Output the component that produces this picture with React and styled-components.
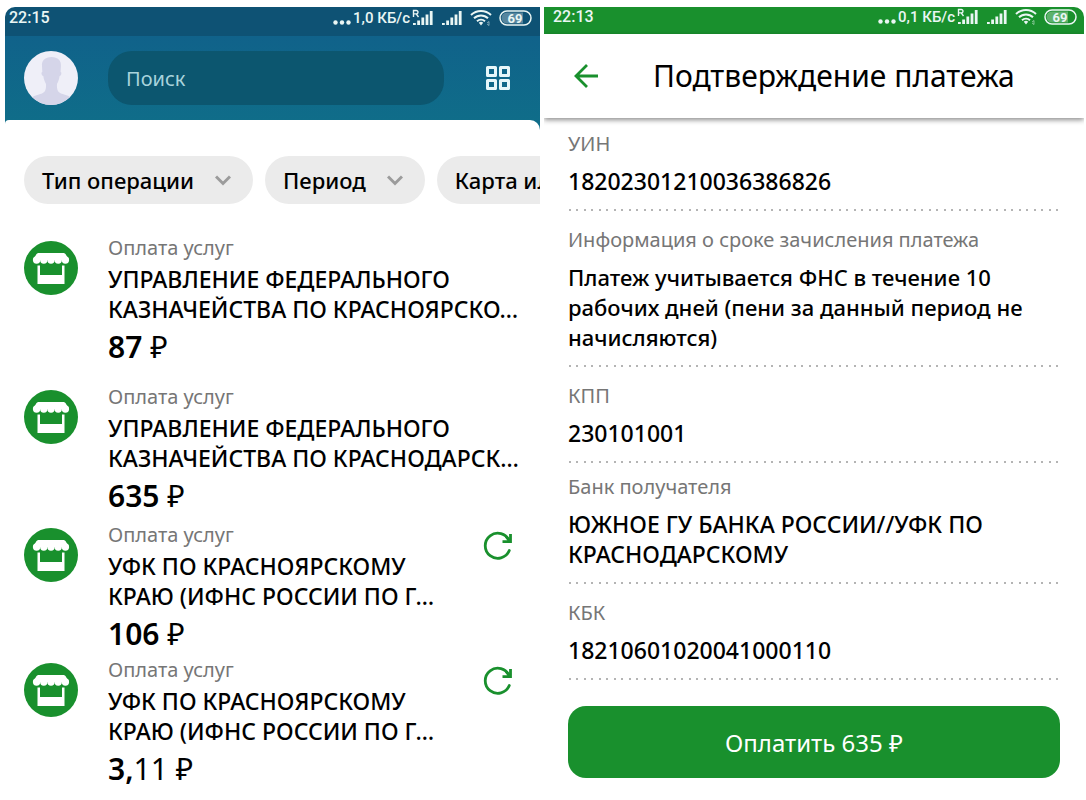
import React from 'react';
import styled, { createGlobalStyle } from 'styled-components';

const GlobalStyle = createGlobalStyle`
  * {
    box-sizing: border-box;
  }

  body {
    margin: 0;
    background: #fff;
    color: #000;
    font-family: 'Noto Sans', 'Open Sans', sans-serif;
  }

  button,
  input {
    border: 0;
    padding: 0;
    font: inherit;
    color: inherit;
    background: none;
  }

  button {
    cursor: pointer;
  }
`;

const Screens = styled.div`
  display: grid;
  grid-template-columns: 535fr 540fr;
  gap: 4px;
  align-items: start;
  padding: 7px 2px 0 5px;
`;

const Phone = styled.section`
  min-width: 0;
  overflow: hidden;
  border-radius: ${(p) => p.$radius};
`;

/* status bar */

const StatusRow = styled.div`
  display: flex;
  justify-content: space-between;
  height: ${(p) => p.$height};
  padding: ${(p) => p.$padding};
  background: ${(p) => p.$background};
  color: #eaf6f4;
  font-family: Roboto, sans-serif;
  font-size: 16px;
  font-weight: 500;
  line-height: 20px;
`;

const StatusIcons = styled.div`
  display: flex;
  align-items: center;
  height: 20px;
  gap: 7px;
`;

const Traffic = styled.div`
  display: flex;
  align-items: center;
  gap: 2px;
  font-size: 15px;
`;

/* operations screen */

const SearchHeader = styled.header`
  display: flex;
  align-items: center;
  height: 94px;
  padding: 0 30px 10px 19px;
  background: linear-gradient(#10628a, #0f6e89);
`;

const SearchInput = styled.input`
  flex: 1;
  min-width: 0;
  height: 54px;
  margin: 0 42px 0 30px;
  padding: 0 18px;
  border-radius: 24px;
  background: #0c566f;
  color: #fff;
  font-size: 20px;

  &::placeholder {
    color: #a9d3dc;
    opacity: 1;
  }
`;

const IconButton = styled.button`
  display: flex;
  flex: none;
  color: ${(p) => p.$color};
`;

const Sheet = styled.main`
  margin-top: -10px;
  padding: 36px 0 12px 19px;
  border-radius: 4px 10px 0 0;
  background: #fff;
`;

const Chips = styled.div`
  display: flex;
  gap: 12px;
  overflow: hidden;
`;

const Chip = styled.button`
  display: flex;
  flex: none;
  align-items: center;
  gap: 21px;
  height: 48px;
  padding: 0 22px 0 18px;
  border-radius: 24px;
  background: #ebebeb;
  font-size: 22px;
  font-weight: 500;
  line-height: 30px;
`;

const OperationList = styled.ul`
  margin: 32px 0 0;
  padding: 0;
  list-style: none;
`;

const Operation = styled.li`
  display: flex;
  align-items: flex-start;
  margin-bottom: ${(p) => p.$gap};
  padding-right: 28px;
`;

const ShopBadge = styled.div`
  display: flex;
  flex: none;
  width: 54px;
  height: 54px;
  margin: 5px 30px 0 0;
  border-radius: 50%;
  background: #19902d;
`;

const OperationText = styled.div`
  flex: 1;
  min-width: 0;
  white-space: nowrap;
`;

const Label = styled.div`
  color: #767676;
  font-size: 20px;
  line-height: 24px;
`;

const OperationTitle = styled.div`
  margin-top: 4px;
  font-size: 23px;
  font-weight: 500;
  line-height: 30px;
`;

const Line = styled.span`
  display: block;
`;

const Amount = styled.div`
  margin-top: 5px;
  font-size: 30px;
  line-height: 36px;

  b {
    font-weight: 600;
  }
`;

const Repeat = styled(IconButton)`
  margin-top: 7px;
`;

/* payment screen */

const TitleBar = styled.header`
  position: relative;
  display: flex;
  align-items: center;
  gap: 54px;
  height: 84px;
  padding-left: 29px;
  background: #fff;
  box-shadow: 0 2px 5px rgba(0, 0, 0, 0.45);
`;

const Title = styled.h1`
  margin: 0;
  font-size: 30px;
  font-weight: 400;
  line-height: 40px;
  white-space: nowrap;
`;

const PaymentBody = styled.main`
  padding: 0 24px 20px;
`;

const Fields = styled.dl`
  margin: 0;
`;

const Field = styled.div`
  padding: ${(p) => (p.$tight ? '12px' : '17px')} 0 13px;

  &:first-child {
    padding-top: 14px;
  }

  &::after {
    content: '';
    display: block;
    height: 2px;
    margin: 13px 0 -13px;
    background: repeating-linear-gradient(
      90deg,
      transparent 0 1px,
      #b4b4b4 1px 3px,
      transparent 3px 8px,
      #b4b4b4 8px 10px,
      transparent 10px 15px
    );
  }
`;

const FieldValue = styled.dd`
  margin: 10px 0 0;
  font-size: ${(p) => (p.$prose ? '22px' : '23px')};
  font-weight: 500;
  line-height: 30px;
`;

const PayButton = styled.button`
  display: block;
  width: 100%;
  height: 72px;
  margin-top: 26px;
  border-radius: 18px;
  background: #19902d;
  color: #fff;
  font-size: 24px;
`;

const Signal = ({ roaming }) => (
  <svg width="22" height="18" viewBox="0 0 22 18" fill="currentColor" aria-hidden="true">
    <path d="M1 14h2.8v2H1zM5.200 11.500H8V16H5.200zM9.400 8.500h2.800V16H9.400zM13.600 5.500h2.800V16h-2.800zM17.800 2h2.800v14h-2.800z" />
    {roaming && (
      <path d="M1.500 8V1.500h2.800a1.700 1.700 0 0 1 0 3.400H1.500M4.200 4.900 6.500 8" fill="none" stroke="currentColor" strokeWidth="1.400" />
    )}
  </svg>
);

const Wifi = () => (
  <svg width="22" height="18" viewBox="0 0 22 18" fill="none" stroke="currentColor" strokeWidth="2" aria-hidden="true">
    <path d="M1 6a14.500 14.500 0 0 1 20 0M4 9.300a10 10 0 0 1 14 0M7 12.300a6 6 0 0 1 8 0" />
    <path d="M8.800 13.800a3.400 3.400 0 0 1 4.400 0L11 16.500z" fill="currentColor" stroke="none" />
    <path d="m17 14 2-1.500v4L17 15" strokeWidth="1" opacity=".5" />
  </svg>
);

const Battery = () => (
  <svg width="33" height="16" viewBox="0 0 33 16" aria-hidden="true">
    <path d="M8 2.500h16v11H8a5.500 5.500 0 0 1 0-11z" fill="#fff" opacity=".3" />
    <rect x="1" y="1" width="31" height="14" rx="7" fill="none" stroke="currentColor" strokeWidth="1.500" />
    <text x="16" y="12.500" textAnchor="middle" fontSize="13" fontWeight="700" fill="currentColor">
      69
    </text>
  </svg>
);

const Dots = () => (
  <svg width="18" height="18" viewBox="0 0 18 18" fill="currentColor" aria-hidden="true">
    <circle cx="2.500" cy="13.500" r="2.200" />
    <circle cx="9" cy="13.500" r="2.200" />
    <circle cx="15.500" cy="13.500" r="2.200" />
  </svg>
);

const Avatar = () => (
  <svg width="54" height="54" viewBox="0 0 54 54" role="img" aria-label="Профиль">
    <defs>
      <clipPath id="avatar">
        <circle cx="27" cy="27" r="27" />
      </clipPath>
    </defs>
    <g clipPath="url(#avatar)">
      <rect width="54" height="54" fill="#efeff8" />
      <path
        d="M27.500 6C21 6 17.500 9.500 18 15l.3 6c-1.300 0-1 3.500 1 4 .6 4 1.700 6 2.700 8 .3 5-.5 8-4 9.500-4 1.500-9 2-11 5V54h41v-6c-2-3.500-7-4-11-5.500-3.500-1.500-4.300-4.500-4-9.500 1-2 2-4 2.600-8 2-.5 2.300-4 1-4l.3-6c.5-5.500-3-9-9.400-9z"
        fill="#d5d5e9"
      />
    </g>
  </svg>
);

const GridIcon = () => (
  <svg width="24" height="24" viewBox="0 0 24 24" fill="none" stroke="currentColor" strokeWidth="3">
    <path d="M1.500 1.500h8v8h-8zM14.500 1.500h8v8h-8zM1.500 14.500h8v8h-8zM14.500 14.500h8v8h-8z" strokeLinejoin="round" />
  </svg>
);

const Chevron = () => (
  <svg width="16" height="12" viewBox="0 0 16 12" fill="none" stroke="#9b9b9b" strokeWidth="3" aria-hidden="true">
    <path d="m1 2.500 7 7 7-7" />
  </svg>
);

const Shop = () => (
  <svg width="54" height="54" viewBox="0 0 54 54" fill="#fff" aria-hidden="true">
    <path d="M14 12h26l1.500 1 3.500 6H9l3.500-6z" />
    {[12.6, 19.8, 27, 34.2, 41.4].map((x) => (
      <circle key={x} cx={x} cy="19" r="3.700" />
    ))}
    <path d="M13.500 24.500H16V34h22v-9.500h2.500V43h-27z" />
  </svg>
);

const RepeatIcon = () => (
  <svg width="30" height="30" viewBox="0 0 30 30" fill="none" stroke="currentColor" strokeWidth="2.800">
    <path d="M27.300 20.500A12.500 12.500 0 1 1 27.300 11" strokeLinecap="round" />
    <path d="M28.500 4v7.600h-8" />
    <path d="m24 6.500 4 5" />
  </svg>
);

const BackIcon = () => (
  <svg width="26" height="26" viewBox="0 0 26 26" fill="none" stroke="currentColor" strokeWidth="2.800">
    <path d="M25 13H3M14 2 3 13l11 11" />
  </svg>
);

const StatusBar = ({ time, speed, ...bar }) => (
  <StatusRow {...bar}>
    <span>{time}</span>
    <StatusIcons>
      <Traffic>
        <Dots />
        <span>{speed}</span>
        <Signal roaming />
      </Traffic>
      <Signal />
      <Wifi />
      <Battery />
    </StatusIcons>
  </StatusRow>
);

const operations = [
  {
    id: 1,
    title: ['УПРАВЛЕНИЕ ФЕДЕРАЛЬНОГО', 'КАЗНАЧЕЙСТВА ПО КРАСНОЯРСКО…'],
    whole: '87',
    gap: '20px',
  },
  {
    id: 2,
    title: ['УПРАВЛЕНИЕ ФЕДЕРАЛЬНОГО', 'КАЗНАЧЕЙСТВА ПО КРАСНОДАРСК…'],
    whole: '635',
    gap: '9px',
  },
  {
    id: 3,
    title: ['УФК ПО КРАСНОЯРСКОМУ', 'КРАЮ (ИФНС РОССИИ ПО Г…'],
    whole: '106',
    repeat: true,
    gap: '6px',
  },
  {
    id: 4,
    title: ['УФК ПО КРАСНОЯРСКОМУ', 'КРАЮ (ИФНС РОССИИ ПО Г…'],
    whole: '3,',
    cents: '11',
    repeat: true,
    gap: '0',
  },
];

const fields = [
  { label: 'УИН', value: ['18202301210036386826'] },
  {
    label: 'Информация о сроке зачисления платежа',
    value: ['Платеж учитывается ФНС в течение 10', 'рабочих дней (пени за данный период не', 'начисляются)'],
    prose: true,
  },
  { label: 'КПП', value: ['230101001'] },
  { label: 'Банк получателя', value: ['ЮЖНОЕ ГУ БАНКА РОССИИ//УФК ПО', 'КРАСНОДАРСКОМУ'], tight: true },
  { label: 'КБК', value: ['18210601020041000110'] },
];

const Operations = () => (
  <Phone $radius="10px 0 0 0">
    <StatusBar time="22:15" speed="1,0 КБ/с" $height="29px" $padding="1px 8px 0 4px" $background="#0e5274" />
    <SearchHeader>
      <Avatar />
      <SearchInput type="search" placeholder="Поиск" aria-label="Поиск" />
      <IconButton $color="#e6f7fa" aria-label="Каталог">
        <GridIcon />
      </IconButton>
    </SearchHeader>
    <Sheet>
      <Chips>
        {['Тип операции', 'Период', 'Карта или'].map((name) => (
          <Chip key={name}>
            {name}
            <Chevron />
          </Chip>
        ))}
      </Chips>
      <OperationList>
        {operations.map((operation) => (
          <Operation key={operation.id} $gap={operation.gap}>
            <ShopBadge>
              <Shop />
            </ShopBadge>
            <OperationText>
              <Label>Оплата услуг</Label>
              <OperationTitle>
                {operation.title.map((line) => (
                  <Line key={line}>{line}</Line>
                ))}
              </OperationTitle>
              <Amount>
                <b>{operation.whole}</b>
                {operation.cents} ₽
              </Amount>
            </OperationText>
            {operation.repeat && (
              <Repeat $color="#19902d" aria-label="Повторить">
                <RepeatIcon />
              </Repeat>
            )}
          </Operation>
        ))}
      </OperationList>
    </Sheet>
  </Phone>
);

const Payment = () => (
  <Phone $radius="0 10px 0 0">
    <StatusBar time="22:13" speed="0,1 КБ/с" $height="27px" $padding="0 7px 0 9px" $background="#19902d" />
    <TitleBar>
      <IconButton $color="#19902d" aria-label="Назад">
        <BackIcon />
      </IconButton>
      <Title>Подтверждение платежа</Title>
    </TitleBar>
    <PaymentBody>
      <Fields>
        {fields.map((field) => (
          <Field key={field.label} $tight={field.tight}>
            <Label as="dt">{field.label}</Label>
            <FieldValue $prose={field.prose}>
              {field.value.map((line) => (
                <Line key={line}>{line}</Line>
              ))}
            </FieldValue>
          </Field>
        ))}
      </Fields>
      <PayButton>Оплатить 635 ₽</PayButton>
    </PaymentBody>
  </Phone>
);

const App = () => (
  <>
    <GlobalStyle />
    <Screens>
      <Operations />
      <Payment />
    </Screens>
  </>
);

export default App;
